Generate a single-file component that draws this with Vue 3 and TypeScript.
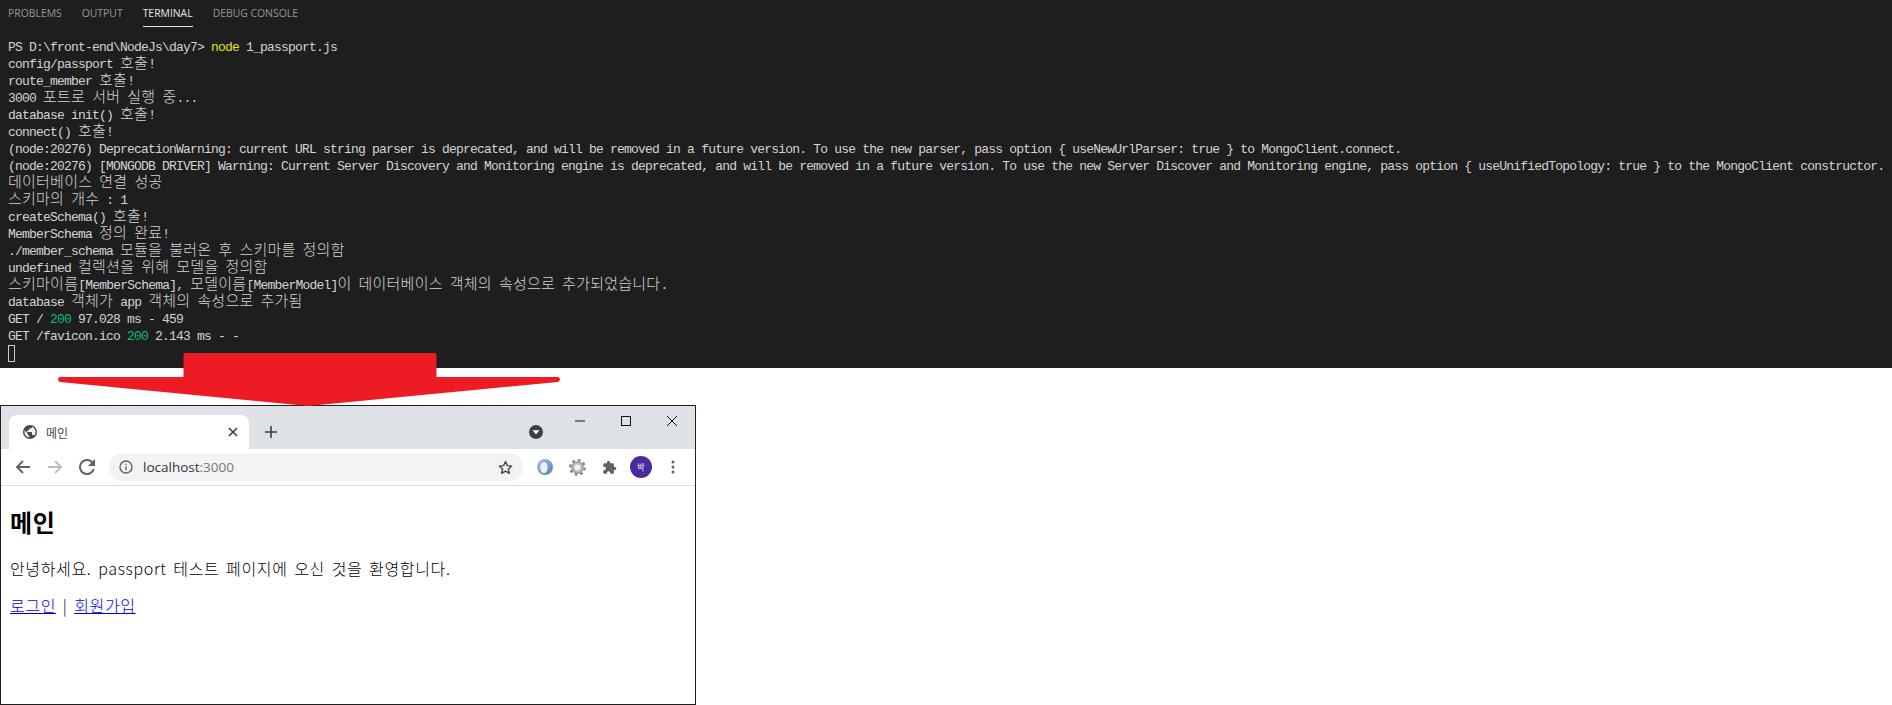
<script setup lang="ts">
interface Seg { t: string; c: string }
const raw: string[] = [
  'PS D:\\front-end\\NodeJs\\day7> {y}node{/} 1_passport.js',
  'config/passport 호출!',
  'route_member 호출!',
  '3000 포트로 서버 실행 중...',
  'database init() 호출!',
  'connect() 호출!',
  '(node:20276) DeprecationWarning: current URL string parser is deprecated, and will be removed in a future version. To use the new parser, pass option { useNewUrlParser: true } to MongoClient.connect.',
  '(node:20276) [MONGODB DRIVER] Warning: Current Server Discovery and Monitoring engine is deprecated, and will be removed in a future version. To use the new Server Discover and Monitoring engine, pass option { useUnifiedTopology: true } to the MongoClient constructor.',
  '데이터베이스 연결 성공',
  '스키마의 개수 : 1',
  'createSchema() 호출!',
  'MemberSchema 정의 완료!',
  './member_schema 모듈을 불러온 후 스키마를 정의함',
  'undefined 컬렉션을 위해 모델을 정의함',
  '스키마이름[MemberSchema], 모델이름[MemberModel]이 데이터베이스 객체의 속성으로 추가되었습니다.',
  'database 객체가 app 객체의 속성으로 추가됨',
  'GET / {g}200{/} 97.028 ms - 459',
  'GET /favicon.ico {g}200{/} 2.143 ms - -',
]

function parse(line: string): Seg[] {
  const out: Seg[] = []
  const parts = line.split(/(\{y\}.*?\{\/\}|\{g\}.*?\{\/\}|[\uac00-\ud7a3]+)/).filter(Boolean)
  for (const p of parts) {
    if (p.startsWith('{y}')) out.push({ t: p.slice(3, -3), c: 'yellow' })
    else if (p.startsWith('{g}')) out.push({ t: p.slice(3, -3), c: 'green' })
    else if (/^[\uac00-\ud7a3]/.test(p)) out.push({ t: p, c: 'ko' })
    else out.push({ t: p, c: '' })
  }
  return out
}
const lines = raw.map(parse)
const tabs = ['PROBLEMS', 'OUTPUT', 'TERMINAL', 'DEBUG CONSOLE']
</script>

<template>
  <div class="page">
    <section class="panel">
      <nav class="tabs">
        <span v-for="t in tabs" :key="t" class="tab" :class="{ active: t === 'TERMINAL' }">{{ t }}</span>
      </nav>
      <div class="term">
        <div v-for="(l, i) in lines" :key="i" class="line">
          <span v-for="(s, j) in l" :key="j" :class="s.c">{{ s.t }}</span>
        </div>
        <div class="line"><span class="cursor"></span></div>
      </div>
    </section>

    <section class="win">
      <header class="strip">
        <div class="chrome-tab">
          <svg class="globe" width="14" height="14" viewBox="0 0 24 24"><path fill="#45484d" d="M12 0a12 12 0 1 0 0 24 12 12 0 0 0 0-24zM2.600 12c0-.9.1-1.700.3-2.500L8.400 15v1.200c0 1.300 1 2.400 2.400 2.400v2.700A9.400 9.400 0 0 1 2.600 12zm16.300 6.300c-.3-1-1.200-1.700-2.200-1.700h-1.200v-3.500c0-.7-.5-1.200-1.200-1.200H7.200V9.600h2.400c.7 0 1.200-.5 1.200-1.200V6h2.400c1.300 0 2.400-1 2.400-2.400v-.5a9.400 9.400 0 0 1 3.300 15.200z"/></svg>
          <span class="tab-title">메인</span>
          <svg class="tab-x" width="10" height="10" viewBox="0 0 10 10"><path d="M1 1l8 8M9 1l-8 8" stroke="#3c4043" stroke-width="1.600" fill="none"/></svg>
        </div>
        <svg class="plus" width="12" height="12" viewBox="0 0 12 12"><path d="M6 0v12M0 6h12" stroke="#3c4043" stroke-width="1.600" fill="none"/></svg>
        <div class="strip-right">
          <svg class="drop" width="14" height="14" viewBox="0 0 14 14"><circle cx="7" cy="7" r="7" fill="#3c4043"/><path d="M3.500 5.200h7L7 9.500z" fill="#fff"/></svg>
          <svg class="wc min" width="12" height="12" viewBox="0 0 12 12"><path d="M1 6h10" stroke="#111" stroke-width="1" fill="none"/></svg>
          <svg class="wc" width="12" height="12" viewBox="0 0 12 12"><rect x="1.500" y="1.500" width="9" height="9" stroke="#111" stroke-width="1" fill="none"/></svg>
          <svg class="wc" width="12" height="12" viewBox="0 0 12 12"><path d="M1 1l10 10M11 1L1 11" stroke="#111" stroke-width="1" fill="none"/></svg>
        </div>
      </header>
      <div class="toolbar">
        <svg class="nav" width="16" height="16" viewBox="0 0 16 16"><path d="M15 8H2M8 2L2 8l6 6" stroke="#5f6368" stroke-width="1.800" fill="none"/></svg>
        <svg class="nav" width="16" height="16" viewBox="0 0 16 16"><path d="M1 8h13M8 2l6 6-6 6" stroke="#b9bcc0" stroke-width="1.800" fill="none"/></svg>
        <svg class="nav" width="16" height="16" viewBox="0 0 24 24"><path fill="#5f6368" d="M20.500 3.500A11.900 11.900 0 0 0 12 0a12 12 0 1 0 11.600 15h-3.100A9 9 0 1 1 12 3c2.500 0 4.700 1 6.300 2.700L13.500 10.500H24V0z"/></svg>
        <div class="omni">
          <svg width="14" height="14" viewBox="0 0 14 14"><circle cx="7" cy="7" r="6" stroke="#5f6368" stroke-width="1.400" fill="none"/><path d="M7 6.200V10.300M7 3.700v1.400" stroke="#5f6368" stroke-width="1.400"/></svg>
          <span class="url"><b>localhost</b>:3000</span>
          <svg class="star" width="15" height="15" viewBox="0 0 24 24"><path d="M12 2.500l2.900 6.500 7.100.7-5.400 4.700 1.600 7-6.200-3.700-6.200 3.700 1.600-7L2 9.700 9.100 9z" stroke="#45484d" stroke-width="2.200" fill="none" stroke-linejoin="round"/></svg>
        </div>
        <div class="ext">
          <svg width="18" height="18" viewBox="0 0 18 18"><defs><linearGradient id="sph" x1="0" y1="0" x2="1" y2="1"><stop offset="0" stop-color="#a9c6e2"/><stop offset="1" stop-color="#4f80b6"/></linearGradient></defs><circle cx="9" cy="9" r="8" fill="url(#sph)"/><ellipse cx="8" cy="9.500" rx="3.600" ry="5.500" fill="#eaf1f8"/></svg>
          <svg width="17" height="17" viewBox="0 0 24 24"><circle cx="12" cy="12" r="10.200" fill="none" stroke="#858789" stroke-width="3.400" stroke-dasharray="4 4.010"/><circle cx="12" cy="12" r="9" fill="#9b9d9f"/><circle cx="12" cy="12" r="6.800" fill="#c4c5c6"/><circle cx="12" cy="12" r="3.800" fill="#f5f5f5"/></svg>
          <svg width="15" height="15" viewBox="0 0 24 24"><path fill="#5f6368" d="M20.500 11H19V7a2 2 0 0 0-2-2h-4V3.500a2.500 2.500 0 0 0-5 0V5H4a2 2 0 0 0-2 2v3.800h1.500a2.700 2.700 0 0 1 0 5.400H2V20a2 2 0 0 0 2 2h3.800v-1.500a2.700 2.700 0 0 1 5.400 0V22H17a2 2 0 0 0 2-2v-4h1.500a2.500 2.500 0 0 0 0-5z"/></svg>
          <span class="avatar">박</span>
          <svg width="4" height="14" viewBox="0 0 4 14"><g fill="#5f6368"><circle cx="2" cy="2" r="1.500"/><circle cx="2" cy="7" r="1.500"/><circle cx="2" cy="12" r="1.500"/></g></svg>
        </div>
      </div>
      <main class="doc">
        <h1>메인</h1>
        <p>안녕하세요. passport 테스트 페이지에 오신 것을 환영합니다.</p>
        <p class="links"><a>로그인</a> | <a>회원가입</a></p>
      </main>
    </section>

    <svg class="arrow" width="570" height="60" viewBox="0 0 570 60"><path d="M183.500 1.500a1.500 1.500 0 0 1 1.500-1.500h250a1.500 1.500 0 0 1 1.500 1.500V24H558c2.500 0 2.500 4.500 0 5L308 53 60 29c-2.500-.5-2.500-5 0-5h123.500z" fill="#ed1c24"/></svg>
  </div>
</template>

<style>
html, body { margin: 0; background: #fff; }
</style>

<style scoped>
.page { position: relative; width: 1892px; height: 705px; overflow: hidden; background: #fff; }
.panel { height: 368px; background: #1e1e1e; color: #ccc; box-sizing: border-box; }
.tabs { display: flex; gap: 20px; padding: 7px 0 0 8px; height: 27px; box-sizing: border-box; }
.tab { font: 10.4px/13px "Open Sans", sans-serif; color: #969696; height: 19px; }
.tab.active { color: #e7e7e7; border-bottom: 1px solid #e7e7e7; }
.term { padding: 12px 0 0 8px; font-family: "Liberation Mono", monospace; font-size: 13px; letter-spacing: -0.8px; color: #d4d4d4; }
.line { height: 17px; line-height: 17px; white-space: pre; }
.ko { font-family: "Noto Sans CJK KR", sans-serif; font-size: 15px; letter-spacing: 0.24px; font-weight: 300; line-height: 0; }
.yellow { color: #e5e510; }
.green { color: #0dbc79; }
.cursor { display: inline-block; width: 5px; height: 15px; border: 1px solid #ccc; vertical-align: top; }

.win { height: 300px; margin: 37px 0 0 0; width: 696px; box-sizing: border-box; border: 1px solid #1f1f1f; display: flex; flex-direction: column; background: #fff; }
.strip { height: 43px; background: #dee1e6; display: flex; align-items: flex-end; padding-left: 8px; position: relative; flex: none; }
.chrome-tab { width: 240px; height: 34px; background: #fff; border-radius: 8px 8px 0 0; display: flex; align-items: center; padding: 0 0 0 14px; box-sizing: border-box; }
.globe { flex: none; }
.tab-title { margin-left: 9px; font: 12px "Noto Sans CJK KR", sans-serif; color: #45484d; flex: 1; }
.tab-x { margin-right: 11px; }
.plus { margin: 0 0 11px 16px; }
.strip-right { margin-left: auto; display: flex; align-items: flex-start; height: 100%; padding-right: 17px; }
.drop { margin: 19px 31px 0 0; }
.wc { margin-top: 9px; margin-left: 34px; }
.wc.min { margin-left: 0; }

.toolbar { height: 36px; border-bottom: 1px solid #dadce0; display: flex; align-items: center; flex: none; padding-left: 14px; background: #fff; }
.nav { margin-right: 16px; }
.omni { margin-left: -2px; width: 414px; height: 28px; background: #f1f3f4; border-radius: 14px; display: flex; align-items: center; padding: 0 10px 0 10px; box-sizing: border-box; flex: none; }
.url { margin-left: 10px; font: 13.5px "Open Sans", sans-serif; color: #75787c; flex: 1; }
.url b { font-weight: 400; color: #303338; }
.ext { display: grid; grid-template-columns: repeat(5, 32px); justify-items: center; align-items: center; margin-left: 6px; }
.avatar { width: 22px; height: 22px; border-radius: 50%; background: #4a2a9f; color: #fff; font: 8px/22px "Noto Sans CJK KR", sans-serif; text-align: center; }

.doc { padding: 0 0 0 9px; font-family: "Noto Sans CJK KR", sans-serif; color: #000; }
h1 { margin: 18px 0 0; font-size: 24px; line-height: 36px; font-weight: 700; letter-spacing: 0.6px; }
p { margin: 19px 0 0; font-size: 16px; line-height: 18px; letter-spacing: 0.65px; word-spacing: 2.5px; font-weight: 300; }
.links { margin-top: 19px; }
a { color: #0000ee; text-decoration: underline; }

.arrow { position: absolute; left: 0; top: 353px; }
</style>
